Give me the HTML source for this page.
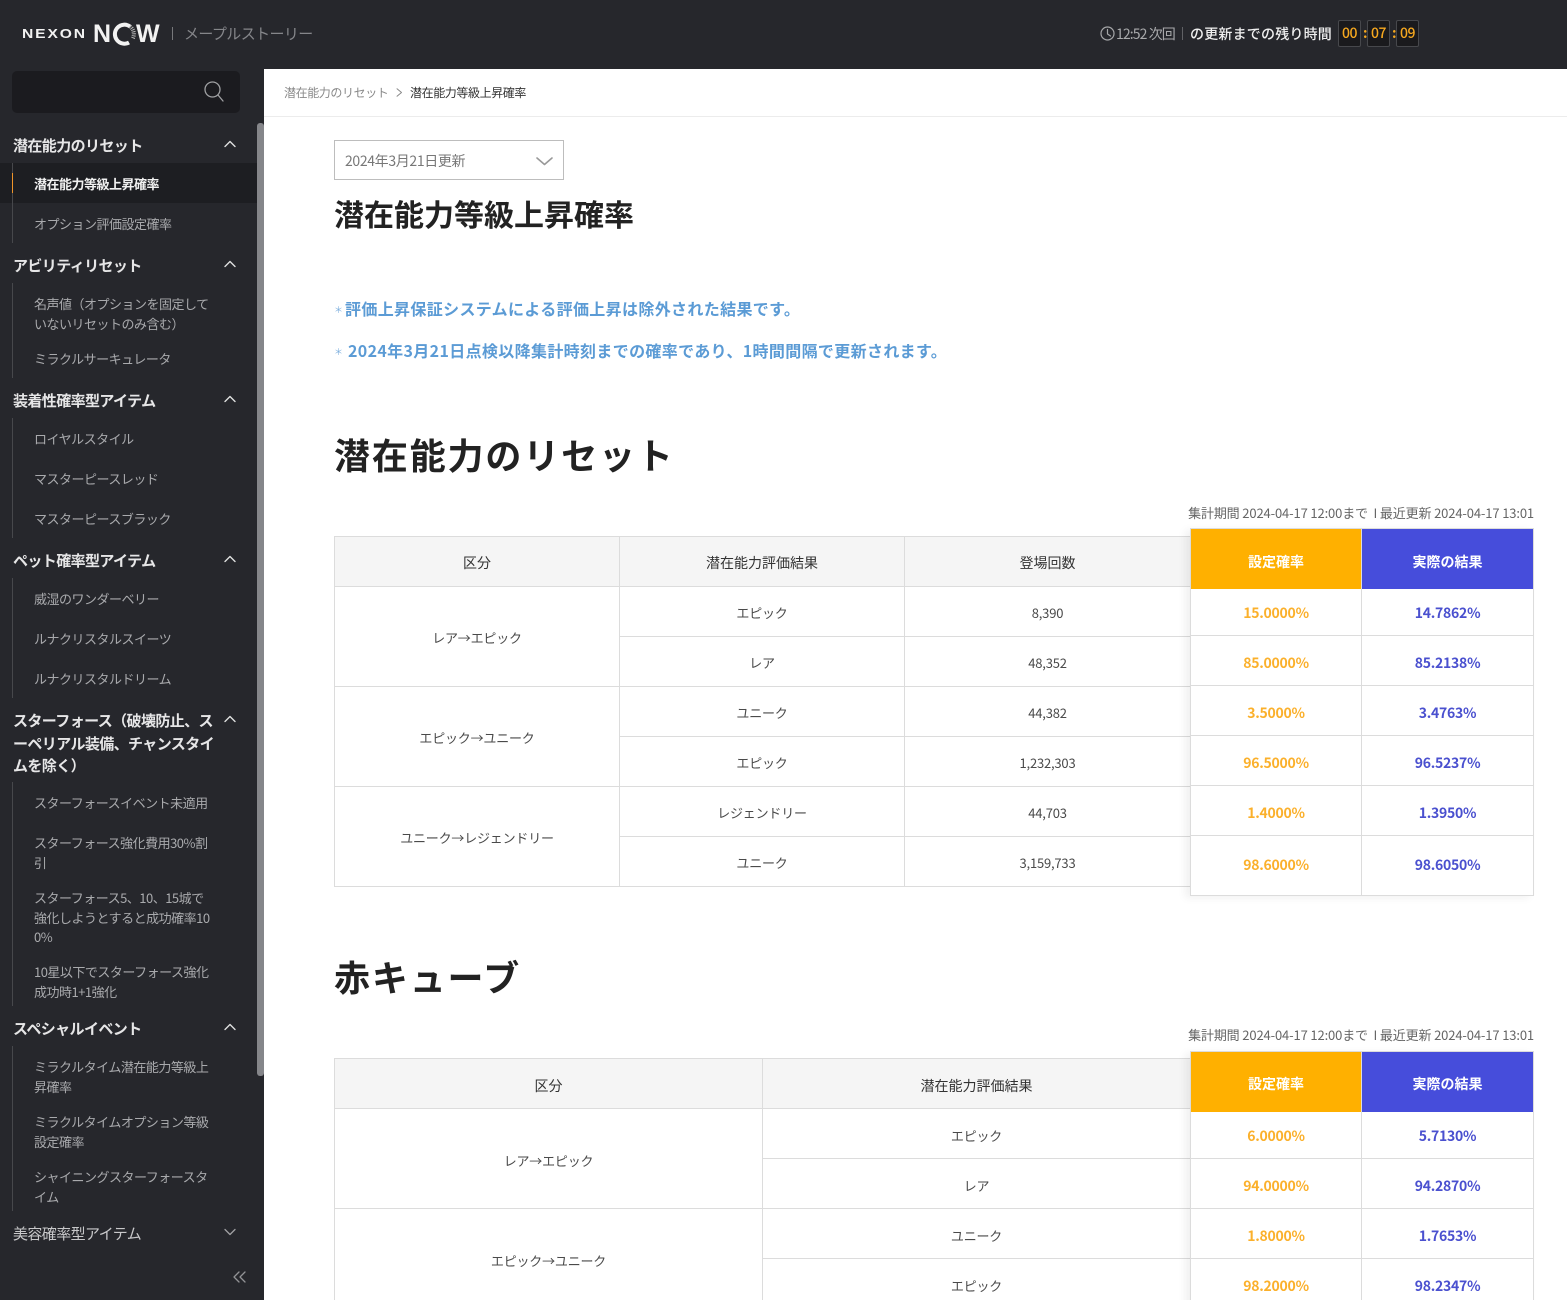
<!DOCTYPE html>
<html lang="ja"><head><meta charset="utf-8"><title>潜在能力等級上昇確率</title>
<style>
*{box-sizing:border-box;margin:0;padding:0}
html,body{width:1567px;height:1300px;overflow:hidden;background:#fff}
body{position:relative;font-family:"Noto Sans CJK JP","Liberation Sans",sans-serif;color:#333}
.a,.t,.s,.h,.l{position:absolute}
.t{line-height:20px;text-align:center;font-size:13px;color:#4a4a4a;white-space:nowrap;letter-spacing:-.2px}
.s{left:34px;white-space:nowrap;font-size:13px;line-height:19.6px;color:#a9aaad;letter-spacing:-.5px}
.h{left:13px;white-space:nowrap;font-size:15px;line-height:22.5px;color:#e6e6e7;font-weight:700;letter-spacing:-.6px}
.l{background:#dcdcdc}
.o,.b{font-size:14px;font-weight:700;line-height:20px;text-align:center;position:absolute;white-space:nowrap;letter-spacing:-.25px}
.o{left:1191px;width:170px;color:#fbb02b}
.b{left:1362px;width:171px;color:#4a50cf}
.th{position:absolute;line-height:20px;text-align:center;font-size:14px;color:#333;font-weight:400}
.hd{position:absolute;text-align:center;color:#fff;font-size:14px;font-weight:700;line-height:66px;height:60px;overflow:hidden}
.h1{position:absolute;left:334px;font-size:36px;font-weight:700;line-height:52px;color:#222;letter-spacing:1.85px;white-space:nowrap}
.meta{position:absolute;right:33px;font-size:13px;line-height:20px;color:#666;white-space:nowrap;letter-spacing:-.14px}
.time{position:absolute;top:20px;width:23px;height:27px;background:#1a1a1d;border:1px solid #47484c;border-radius:2px;color:#f6a81f;font-size:14px;font-weight:500;line-height:25px;text-align:center;letter-spacing:-.5px}
.co{position:absolute;top:23px;color:#f6a81f;font-size:14px;line-height:20px;font-weight:700}
.ic{position:absolute;fill:none;stroke-linecap:round;stroke-linejoin:round}
.bl{position:absolute;font-size:16px;line-height:24px;font-weight:700;color:#5b9bd5;white-space:nowrap;letter-spacing:.35px}
.ast{position:absolute;left:334px;font-size:9px;line-height:24px;font-weight:400;color:#7fb0de}
.lg{position:absolute;font-family:"Liberation Sans",sans-serif;font-weight:700;color:#f2f2f2}
</style></head><body>

<!-- header -->
<div class="a" style="left:0;top:0;width:1567px;height:69px;background:#26272c"></div>
<div class="lg" style="left:22px;top:24px;font-size:12.5px;line-height:20px;letter-spacing:1.5px;transform:scaleX(1.25);transform-origin:left">NEXON</div>
<div class="lg" style="left:93px;top:18px;font-size:25px;line-height:32px">N</div>
<svg class="ic" style="left:110px;top:21px" width="28" height="26" viewBox="0 0 28 26"><path d="M20 5.500A9.500 9.500 0 1 0 19 21.500" stroke="#f2f2f2" stroke-width="4" stroke-linecap="butt"/><path d="M20 5.500A9.500 9.500 0 0 1 22.500 18" stroke="#b5b5b5" stroke-width="4" stroke-dasharray="1 1" stroke-linecap="butt"/></svg>
<div class="lg" style="left:136px;top:18px;font-size:25px;line-height:32px">W</div>
<div class="a" style="left:172px;top:27px;width:1px;height:13px;background:#77787b"></div>
<div class="a" style="left:184px;top:23px;font-size:15px;line-height:22px;color:#85868a;letter-spacing:-.6px;white-space:nowrap">メープルストーリー</div>

<svg class="ic" style="left:1100px;top:26px" width="15" height="15" viewBox="0 0 15 15" stroke="#a5a6a8" stroke-width="1.2"><circle cx="7.500" cy="7.500" r="6.500"/><path d="M7.500 3.500V8L10.500 10"/></svg>
<div class="a" style="left:1116px;top:24px;font-size:14px;line-height:20px;color:#a9aaac;letter-spacing:-.9px;white-space:nowrap">12:52 次回</div>
<div class="a" style="left:1182px;top:27px;width:1px;height:13px;background:#606165"></div>
<div class="a" style="left:1190px;top:24px;font-size:14px;line-height:20px;color:#f0f0f0;font-weight:500;white-space:nowrap;letter-spacing:.2px">の更新までの残り時間</div>
<div class="time" style="left:1338px">00</div><div class="co" style="left:1363px">:</div>
<div class="time" style="left:1367px">07</div><div class="co" style="left:1392px">:</div>
<div class="time" style="left:1396px">09</div>

<!-- sidebar -->
<div class="a" style="left:0;top:69px;width:264px;height:1231px;background:#26272c"></div>
<div class="a" style="left:12px;top:71px;width:228px;height:42px;background:#1b1b1f;border-radius:5px"></div>
<svg class="ic" style="left:204px;top:81px" width="20" height="21" viewBox="0 0 20 21" stroke="#a0a1a3" stroke-width="1.3"><circle cx="8.500" cy="8.500" r="7.500"/><path d="M14 14L19 20"/></svg>
<div class="a" style="left:257px;top:123px;width:7px;height:953px;background:#85868a;border-radius:3px"></div>

<div class="a" style="left:0;top:163px;width:257px;height:40px;background:#1d1e22"></div>
<div class="a" style="left:12px;top:163px;width:1px;height:80px;background:#47484c"></div>
<div class="a" style="left:12px;top:173px;width:1px;height:20px;background:#f0952a"></div>
<div class="a" style="left:12px;top:283px;width:1px;height:95px;background:#47484c"></div>
<div class="a" style="left:12px;top:418px;width:1px;height:120px;background:#47484c"></div>
<div class="a" style="left:12px;top:578px;width:1px;height:120px;background:#47484c"></div>
<div class="a" style="left:12px;top:782px;width:1px;height:224px;background:#47484c"></div>
<div class="a" style="left:12px;top:1046px;width:1px;height:165px;background:#47484c"></div>

<div class="h" style="top:135px">潜在能力のリセット</div>
<div class="s" style="top:174px;color:#f1f1f1;font-weight:700">潜在能力等級上昇確率</div>
<div class="s" style="top:214px">オプション評価設定確率</div>
<div class="h" style="top:255px">アビリティリセット</div>
<div class="s" style="top:294px">名声値（オプションを固定して<br>いないリセットのみ含む）</div>
<div class="s" style="top:349px">ミラクルサーキュレータ</div>
<div class="h" style="top:390px">装着性確率型アイテム</div>
<div class="s" style="top:429px">ロイヤルスタイル</div>
<div class="s" style="top:469px">マスターピースレッド</div>
<div class="s" style="top:509px">マスターピースブラック</div>
<div class="h" style="top:550px">ペット確率型アイテム</div>
<div class="s" style="top:589px">威湿のワンダーベリー</div>
<div class="s" style="top:629px">ルナクリスタルスイーツ</div>
<div class="s" style="top:669px">ルナクリスタルドリーム</div>
<div class="h" style="top:710px">スターフォース（破壊防止、ス<br>ーペリアル装備、チャンスタイ<br>ムを除く）</div>
<div class="s" style="top:793px">スターフォースイベント未適用</div>
<div class="s" style="top:833px">スターフォース強化費用30%割<br>引</div>
<div class="s" style="top:888px">スターフォース5、10、15城で<br>強化しようとすると成功確率10<br>0%</div>
<div class="s" style="top:962px">10星以下でスターフォース強化<br>成功時1+1強化</div>
<div class="h" style="top:1018px">スペシャルイベント</div>
<div class="s" style="top:1057px">ミラクルタイム潜在能力等級上<br>昇確率</div>
<div class="s" style="top:1112px">ミラクルタイムオプション等級<br>設定確率</div>
<div class="s" style="top:1167px">シャイニングスターフォースタ<br>イム</div>
<div class="h" style="top:1223px;font-weight:400;color:#c8c8ca">美容確率型アイテム</div>

<svg class="ic" style="left:224px;top:140px" width="12" height="8" viewBox="0 0 12 8" stroke="#e0e0e0" stroke-width="1.4"><path d="M1 6.500L6 1.500L11 6.500"/></svg>
<svg class="ic" style="left:224px;top:260px" width="12" height="8" viewBox="0 0 12 8" stroke="#e0e0e0" stroke-width="1.4"><path d="M1 6.500L6 1.500L11 6.500"/></svg>
<svg class="ic" style="left:224px;top:395px" width="12" height="8" viewBox="0 0 12 8" stroke="#e0e0e0" stroke-width="1.4"><path d="M1 6.500L6 1.500L11 6.500"/></svg>
<svg class="ic" style="left:224px;top:555px" width="12" height="8" viewBox="0 0 12 8" stroke="#e0e0e0" stroke-width="1.4"><path d="M1 6.500L6 1.500L11 6.500"/></svg>
<svg class="ic" style="left:224px;top:715px" width="12" height="8" viewBox="0 0 12 8" stroke="#e0e0e0" stroke-width="1.4"><path d="M1 6.500L6 1.500L11 6.500"/></svg>
<svg class="ic" style="left:224px;top:1023px" width="12" height="8" viewBox="0 0 12 8" stroke="#e0e0e0" stroke-width="1.4"><path d="M1 6.500L6 1.500L11 6.500"/></svg>
<svg class="ic" style="left:224px;top:1228px" width="12" height="8" viewBox="0 0 12 8" stroke="#a0a1a3" stroke-width="1.3"><path d="M1 1.500L6 6.500L11 1.500"/></svg>
<svg class="ic" style="left:233px;top:1271px" width="13" height="12" viewBox="0 0 13 12" stroke="#929396" stroke-width="1.3"><path d="M6 1L1 6L6 11M12 1L7 6L12 11"/></svg>

<!-- breadcrumb -->
<div class="l" style="left:264px;top:116px;width:1303px;height:1px;background:#ececec"></div>
<div class="a" style="left:284px;top:84px;font-size:12px;line-height:18px;color:#8a8a8a;letter-spacing:-.4px;white-space:nowrap">潜在能力のリセット</div>
<svg class="ic" style="left:396px;top:88px" width="7" height="9" viewBox="0 0 7 9" stroke="#888" stroke-width="1"><path d="M1 .8L5.500 4.500L1 8.200"/></svg>
<div class="a" style="left:410px;top:84px;font-size:12px;line-height:18px;color:#333;letter-spacing:-.4px;white-space:nowrap">潜在能力等級上昇確率</div>

<!-- select -->
<div class="a" style="left:334px;top:140px;width:230px;height:40px;border:1px solid #bdbdbd"></div>
<div class="a" style="left:345px;top:151px;font-size:14px;line-height:20px;color:#777;letter-spacing:-.35px;white-space:nowrap">2024年3月21日更新</div>
<svg class="ic" style="left:536px;top:157px" width="17" height="9" viewBox="0 0 17 9" stroke="#999" stroke-width="1.6"><path d="M1 1L8.500 7.500L16 1"/></svg>

<div class="a" style="left:334px;top:190px;font-size:30px;line-height:46px;font-weight:700;color:#222;white-space:nowrap">潜在能力等級上昇確率</div>
<div class="ast" style="top:298px">＊</div>
<div class="bl" style="left:345px;top:296px">評価上昇保証システムによる評価上昇は除外された結果です。</div>
<div class="ast" style="top:340px">＊</div>
<div class="bl" style="left:348px;top:338px">2024年3月21日点検以降集計時刻までの確率であり、1時間間隔で更新されます。</div>

<div class="h1" style="top:428px">潜在能力のリセット</div>
<div class="meta" style="top:503px">集計期間 2024-04-17 12:00まで &nbsp;I 最近更新 2024-04-17 13:01</div>

<!-- table 1 -->
<div class="a" style="left:334px;top:536px;width:857px;height:51px;background:#f5f5f5"></div>
<div class="l" style="left:334px;top:536px;width:857px;height:1px"></div>
<div class="l" style="left:334px;top:586px;width:857px;height:1px"></div>
<div class="l" style="left:619px;top:636px;width:572px;height:1px"></div>
<div class="l" style="left:334px;top:686px;width:857px;height:1px"></div>
<div class="l" style="left:619px;top:736px;width:572px;height:1px"></div>
<div class="l" style="left:334px;top:786px;width:857px;height:1px"></div>
<div class="l" style="left:619px;top:836px;width:572px;height:1px"></div>
<div class="l" style="left:334px;top:886px;width:857px;height:1px"></div>
<div class="l" style="left:334px;top:536px;width:1px;height:351px"></div>
<div class="l" style="left:619px;top:536px;width:1px;height:351px"></div>
<div class="l" style="left:904px;top:536px;width:1px;height:351px"></div>

<div class="th" style="left:335px;top:553px;width:284px">区分</div>
<div class="th" style="left:620px;top:553px;width:284px">潜在能力評価結果</div>
<div class="th" style="left:905px;top:553px;width:285px">登場回数</div>
<div class="t" style="left:335px;top:628px;width:284px">レア→エピック</div>
<div class="t" style="left:335px;top:728px;width:284px">エピック→ユニーク</div>
<div class="t" style="left:335px;top:828px;width:284px">ユニーク→レジェンドリー</div>
<div class="t" style="left:620px;top:603px;width:284px">エピック</div>
<div class="t" style="left:620px;top:653px;width:284px">レア</div>
<div class="t" style="left:620px;top:703px;width:284px">ユニーク</div>
<div class="t" style="left:620px;top:753px;width:284px">エピック</div>
<div class="t" style="left:620px;top:803px;width:284px">レジェンドリー</div>
<div class="t" style="left:620px;top:853px;width:284px">ユニーク</div>
<div class="t" style="left:905px;top:603px;width:285px">8,390</div>
<div class="t" style="left:905px;top:653px;width:285px">48,352</div>
<div class="t" style="left:905px;top:703px;width:285px">44,382</div>
<div class="t" style="left:905px;top:753px;width:285px">1,232,303</div>
<div class="t" style="left:905px;top:803px;width:285px">44,703</div>
<div class="t" style="left:905px;top:853px;width:285px">3,159,733</div>

<!-- overlay 1 -->
<div class="a" style="left:1190px;top:528px;width:344px;height:368px;background:#fff;border:1px solid #dcdcdc;box-shadow:-5px 2px 8px rgba(0,0,0,.06)"></div>
<div class="hd" style="left:1191px;top:529px;width:170px;background:#ffb000">設定確率</div>
<div class="hd" style="left:1362px;top:529px;width:171px;background:#464ddb">実際の結果</div>
<div class="l" style="left:1361px;top:529px;width:1px;height:366px"></div>
<div class="l" style="left:1191px;top:635px;width:342px;height:1px"></div>
<div class="l" style="left:1191px;top:685px;width:342px;height:1px"></div>
<div class="l" style="left:1191px;top:735px;width:342px;height:1px"></div>
<div class="l" style="left:1191px;top:785px;width:342px;height:1px"></div>
<div class="l" style="left:1191px;top:835px;width:342px;height:1px"></div>
<div class="o" style="top:603px">15.0000%</div><div class="b" style="top:603px">14.7862%</div>
<div class="o" style="top:653px">85.0000%</div><div class="b" style="top:653px">85.2138%</div>
<div class="o" style="top:703px">3.5000%</div><div class="b" style="top:703px">3.4763%</div>
<div class="o" style="top:753px">96.5000%</div><div class="b" style="top:753px">96.5237%</div>
<div class="o" style="top:803px">1.4000%</div><div class="b" style="top:803px">1.3950%</div>
<div class="o" style="top:855px">98.6000%</div><div class="b" style="top:855px">98.6050%</div>

<!-- section 2 -->
<div class="h1" style="top:950px">赤キューブ</div>
<div class="meta" style="top:1025px">集計期間 2024-04-17 12:00まで &nbsp;I 最近更新 2024-04-17 13:01</div>

<div class="a" style="left:334px;top:1058px;width:857px;height:51px;background:#f5f5f5"></div>
<div class="l" style="left:334px;top:1058px;width:857px;height:1px"></div>
<div class="l" style="left:334px;top:1108px;width:857px;height:1px"></div>
<div class="l" style="left:762px;top:1158px;width:429px;height:1px"></div>
<div class="l" style="left:334px;top:1208px;width:857px;height:1px"></div>
<div class="l" style="left:762px;top:1258px;width:429px;height:1px"></div>
<div class="l" style="left:334px;top:1058px;width:1px;height:242px"></div>
<div class="l" style="left:762px;top:1058px;width:1px;height:242px"></div>
<div class="th" style="left:335px;top:1076px;width:427px">区分</div>
<div class="th" style="left:763px;top:1076px;width:427px">潜在能力評価結果</div>
<div class="t" style="left:335px;top:1151px;width:427px">レア→エピック</div>
<div class="t" style="left:335px;top:1251px;width:427px">エピック→ユニーク</div>
<div class="t" style="left:763px;top:1126px;width:427px">エピック</div>
<div class="t" style="left:763px;top:1176px;width:427px">レア</div>
<div class="t" style="left:763px;top:1226px;width:427px">ユニーク</div>
<div class="t" style="left:763px;top:1276px;width:427px">エピック</div>

<div class="a" style="left:1190px;top:1051px;width:344px;height:260px;background:#fff;border:1px solid #dcdcdc;box-shadow:-5px 2px 8px rgba(0,0,0,.06)"></div>
<div class="hd" style="left:1191px;top:1052px;width:170px;background:#ffb000;line-height:64px">設定確率</div>
<div class="hd" style="left:1362px;top:1052px;width:171px;background:#464ddb;line-height:64px">実際の結果</div>
<div class="l" style="left:1361px;top:1052px;width:1px;height:248px"></div>
<div class="l" style="left:1191px;top:1158px;width:342px;height:1px"></div>
<div class="l" style="left:1191px;top:1208px;width:342px;height:1px"></div>
<div class="l" style="left:1191px;top:1258px;width:342px;height:1px"></div>
<div class="o" style="top:1126px">6.0000%</div><div class="b" style="top:1126px">5.7130%</div>
<div class="o" style="top:1176px">94.0000%</div><div class="b" style="top:1176px">94.2870%</div>
<div class="o" style="top:1226px">1.8000%</div><div class="b" style="top:1226px">1.7653%</div>
<div class="o" style="top:1276px">98.2000%</div><div class="b" style="top:1276px">98.2347%</div>

</body></html>
